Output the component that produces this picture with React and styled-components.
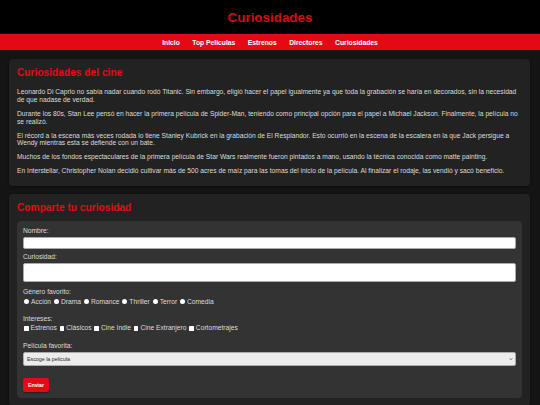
import styled, { createGlobalStyle } from "styled-components";

const GlobalStyle = createGlobalStyle`
  * { box-sizing: border-box; }
  body {
    margin: 0;
    background: #141414;
    color: #dcdcdc;
    font-family: "Liberation Sans", Arial, sans-serif;
    font-size: 6.7px;
  }
`;

const Header = styled.header`
  background: #000;
  height: 34px;
  display: flex;
  align-items: center;
  justify-content: center;
`;

const Title = styled.h1`
  margin: 0;
  color: #d40b14;
  font-size: 13.4px;
  font-weight: bold;
`;

const Nav = styled.nav`
  background: #e50914;
  height: 16px;
  display: flex;
  align-items: center;
  justify-content: center;
  gap: 12.5px;
`;

const NavLink = styled.a`
  color: #fff;
  font-weight: bold;
  font-size: 6.75px;
  text-decoration: none;
`;

const Main = styled.main`
  padding: 9px 10px 0 9px;
  display: flex;
  flex-direction: column;
  gap: 8px;
`;

const Card = styled.section`
  background: #222;
  border-radius: 4px;
  padding: 8px;
  box-shadow: 0 1px 3px rgba(0, 0, 0, 0.5);
`;

const Heading = styled.h2`
  margin: 0 0 ${(p) => p.$mb || "8px"};
  color: #e50914;
  font-size: 10.2px;
  font-weight: bold;
`;

const Text = styled.p`
  margin: 0 0 6.4px;
  line-height: 7.7px;
  &:last-child {
    margin-bottom: 2.4px;
  }
`;

const Form = styled.form`
  background: #333;
  border-radius: 4px;
  padding: 6px;
`;

const Field = styled.div`
  margin-bottom: ${(p) => p.$mb || "3.4px"};
`;

const Label = styled.label`
  display: block;
  line-height: 7.7px;
  margin-bottom: ${(p) => p.$mb || "2.4px"};
`;

const Input = styled.input`
  display: block;
  width: 100%;
  height: 12.5px;
  background: #fff;
  border: 0.6px solid #aaa;
  border-radius: 2px;
  padding: 0 3px;
  font-size: 5.3px;
`;

const TextArea = styled.textarea`
  display: block;
  width: 100%;
  height: 19.5px;
  background: #fff;
  border: 0.6px solid #aaa;
  border-radius: 2px;
  padding: 2px 3px;
  font-size: 5.3px;
  resize: none;
`;

const Options = styled.div`
  line-height: 7.7px;
`;

const Option = styled.label`
  white-space: nowrap;
`;

const Mark = styled.span`
  display: inline-block;
  width: ${(p) => (p.$round ? "5px" : "4.5px")};
  height: ${(p) => (p.$round ? "5px" : "4.5px")};
  margin: 0 2px 0 1px;
  background: #fff;
  border-radius: ${(p) => (p.$round ? "50%" : "0.5px")};
  vertical-align: -0.5px;
`;

const SelectWrap = styled.div`
  position: relative;
`;

const Select = styled.select`
  appearance: none;
  display: block;
  width: 100%;
  height: 14px;
  background: #ececec;
  color: #222;
  border: 0.6px solid #aaa;
  border-radius: 2px;
  padding: 0 3px;
  font-family: "Liberation Sans", Arial, sans-serif;
  font-size: 5.3px;
`;

const Chevron = styled.svg`
  position: absolute;
  right: 3px;
  top: 5px;
  width: 4px;
  height: 4px;
  pointer-events: none;
`;

const Button = styled.button`
  width: 26px;
  height: 14px;
  padding: 0;
  background: #e50914;
  color: #fff;
  border: none;
  border-radius: 2px;
  font-family: "Liberation Sans", Arial, sans-serif;
  font-weight: bold;
  font-size: 5.3px;
  box-shadow: 0 1px 2px rgba(0, 0, 0, 0.4);
`;

const curiosidades = [
  "Leonardo Di Caprio no sabía nadar cuando rodó Titanic. Sin embargo, eligió hacer el papel igualmente ya que toda la grabación se haría en decorados, sin la necesidad de que nadase de verdad.",
  "Durante los 80s, Stan Lee pensó en hacer la primera película de Spider-Man, teniendo como principal opción para el papel a Michael Jackson. Finalmente, la película no se realizó.",
  "El récord a la escena más veces rodada lo tiene Stanley Kubrick en la grabación de El Resplandor. Esto ocurrió en la escena de la escalera en la que Jack persigue a Wendy mientras esta se defiende con un bate.",
  "Muchos de los fondos espectaculares de la primera película de Star Wars realmente fueron pintados a mano, usando la técnica conocida como matte painting.",
  "En Interstellar, Christopher Nolan decidió cultivar más de 500 acres de maíz para las tomas del inicio de la película. Al finalizar el rodaje, las vendió y sacó beneficio.",
];

const generos = ["Acción", "Drama", "Romance", "Thriller", "Terror", "Comedia"];
const intereses = ["Estrenos", "Clásicos", "Cine Indie", "Cine Extranjero", "Cortometrajes"];
const links = ["Inicio", "Top Peliculas", "Estrenos", "Directores", "Curiosidades"];

const App = () => {
  return (
    <>
      <GlobalStyle />
      <Header>
        <Title>Curiosidades</Title>
      </Header>
      <Nav>
        {links.map((l) => (
          <NavLink key={l} href="#">
            {l}
          </NavLink>
        ))}
      </Nav>
      <Main>
        <Card>
          <Heading $mb="10px">Curiosidades del cine</Heading>
          {curiosidades.map((c, i) => (
            <Text key={i}>{c}</Text>
          ))}
        </Card>
        <Card>
          <Heading>Comparte tu curiosidad</Heading>
          <Form onSubmit={(e) => e.preventDefault()}>
            <Field>
              <Label>Nombre:</Label>
              <Input type="text" />
            </Field>
            <Field $mb="5.8px">
              <Label>Curiosidad:</Label>
              <TextArea />
            </Field>
            <Field $mb="9.5px">
              <Label $mb="2.3px">Género favorito:</Label>
              <Options>
                {generos.map((g) => (
                  <Option key={g}>
                    <Mark $round />
                    {g}{" "}
                  </Option>
                ))}
              </Options>
            </Field>
            <Field $mb="10.3px">
              <Label $mb="1.3px">Intereses:</Label>
              <Options>
                {intereses.map((g) => (
                  <Option key={g}>
                    <Mark />
                    {g}{" "}
                  </Option>
                ))}
              </Options>
            </Field>
            <Field $mb="12px">
              <Label>Película favorita:</Label>
              <SelectWrap>
                <Select defaultValue="">
                  <option value="">Escoge la película</option>
                </Select>
                <Chevron viewBox="0 0 10 10">
                  <path d="M2 3.5 L5 6.5 L8 3.5" fill="none" stroke="#333" strokeWidth="2" />
                </Chevron>
              </SelectWrap>
            </Field>
            <Button type="submit">Enviar</Button>
          </Form>
        </Card>
      </Main>
    </>
  );
};

export default App;
